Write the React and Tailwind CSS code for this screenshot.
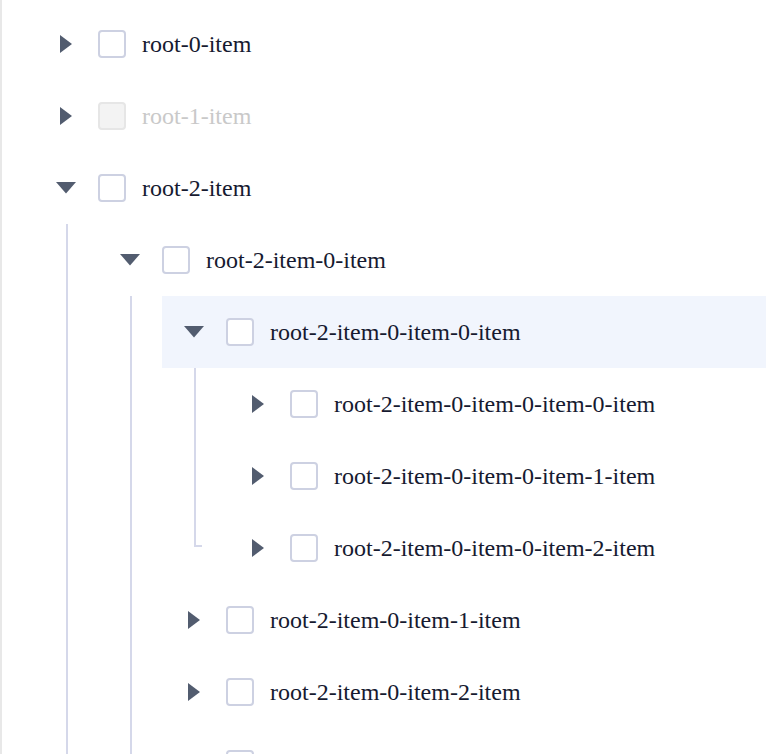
import React from 'react';

const tree = [
    { id: 'root-0-item' },
    { id: 'root-1-item', disabled: true },
    {
        id: 'root-2-item',
        open: true,
        children: [
            {
                id: 'root-2-item-0-item',
                open: true,
                children: [
                    {
                        id: 'root-2-item-0-item-0-item',
                        open: true,
                        active: true,
                        children: [
                            { id: 'root-2-item-0-item-0-item-0-item' },
                            { id: 'root-2-item-0-item-0-item-1-item' },
                            { id: 'root-2-item-0-item-0-item-2-item' },
                        ],
                    },
                    { id: 'root-2-item-0-item-1-item' },
                    { id: 'root-2-item-0-item-2-item' },
                    { id: 'root-2-item-0-item-3-item' },
                ],
            },
            { id: 'root-2-item-1-item' },
        ],
    },
];

const Caret = ({ open }) =>
    open ? (
        <svg width="20" height="12" viewBox="0 0 20 12">
            <polygon points="0,0 20,0 10,11.5" fill="#525c6f" />
        </svg>
    ) : (
        <svg width="12" height="18" viewBox="0 0 12 18">
            <polygon points="0,0 12,9 0,18" fill="#525c6f" />
        </svg>
    );

const Node = ({ node }) => {
    return (
        <div>
            <div
                className={`flex h-[72px] items-center ${node.active ? 'bg-[#f1f5fd]' : ''}`}
            >
                <div className="flex w-[64px] shrink-0 justify-center">
                    <Caret open={node.open} />
                </div>
                <div
                    className={`h-[28px] w-[28px] shrink-0 rounded-[4px] border-2 ${
                        node.disabled ? 'border-[#e6e6e6] bg-[#f3f3f3]' : 'border-[#cdd1e2] bg-white'
                    }`}
                />
                <span
                    className={`ml-4 whitespace-nowrap text-[24px] ${
                        node.disabled ? 'text-[#c9c9c9]' : 'text-[#161a30]'
                    }`}
                >
                    {node.id}
                </span>
            </div>
            {node.open && node.children && (
                <div className="relative ml-8 pl-8">
                    {/* connector line, ends in a short tick at the last child */}
                    <span className="absolute left-0 top-0 bottom-[37px] w-[8px] border-b-2 border-l-2 border-[#d5d8ea]" />
                    {node.children.map((c) => (
                        <Node key={c.id} node={c} />
                    ))}
                </div>
            )}
        </div>
    );
};

const App = () => {
    return (
        <div className="min-h-screen border-l-2 border-[#e8e8e8] bg-white pl-8 pt-2 [font-family:Liberation_Serif,serif]">
            {tree.map((n) => (
                <Node key={n.id} node={n} />
            ))}
        </div>
    );
};

export default App;
